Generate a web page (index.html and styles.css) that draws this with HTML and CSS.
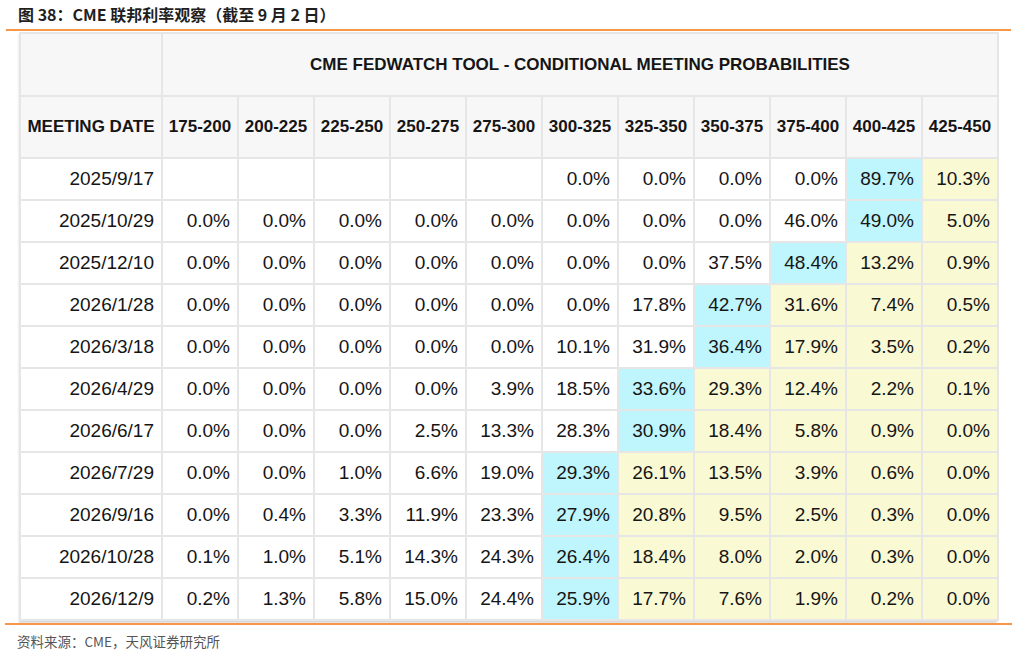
FILE: index.html
```html
<!DOCTYPE html>
<html lang="zh">
<head>
<meta charset="utf-8">
<title>CME 联邦利率观察</title>
<link rel="stylesheet" href="styles.css">
</head>
<body>
<div class="page">
  <div class="caption">图 38：CME 联邦利率观察（截至 9 月 2 日）</div>
  <div class="rule rule-top"></div>
  <div class="table-wrap">
    <table class="fw">
      <colgroup>
        <col class="c-date">
        <col class="c-n"><col class="c-n"><col class="c-n"><col class="c-n"><col class="c-n"><col class="c-n"><col class="c-n"><col class="c-n"><col class="c-n"><col class="c-n"><col class="c-n">
      </colgroup>
      <thead>
        <tr class="h1">
          <th></th>
          <th colspan="11" class="title">CME FEDWATCH TOOL - CONDITIONAL MEETING PROBABILITIES</th>
        </tr>
        <tr class="h2">
          <th>MEETING DATE</th>
          <th>175-200</th><th>200-225</th><th>225-250</th><th>250-275</th><th>275-300</th><th>300-325</th><th>325-350</th><th>350-375</th><th>375-400</th><th>400-425</th><th>425-450</th>
        </tr>
      </thead>
      <tbody>
        <tr><td>2025/9/17</td><td></td><td></td><td></td><td></td><td></td><td>0.0%</td><td>0.0%</td><td>0.0%</td><td>0.0%</td><td class="b">89.7%</td><td class="y">10.3%</td></tr>
        <tr><td>2025/10/29</td><td>0.0%</td><td>0.0%</td><td>0.0%</td><td>0.0%</td><td>0.0%</td><td>0.0%</td><td>0.0%</td><td>0.0%</td><td>46.0%</td><td class="b">49.0%</td><td class="y">5.0%</td></tr>
        <tr><td>2025/12/10</td><td>0.0%</td><td>0.0%</td><td>0.0%</td><td>0.0%</td><td>0.0%</td><td>0.0%</td><td>0.0%</td><td>37.5%</td><td class="b">48.4%</td><td class="y">13.2%</td><td class="y">0.9%</td></tr>
        <tr><td>2026/1/28</td><td>0.0%</td><td>0.0%</td><td>0.0%</td><td>0.0%</td><td>0.0%</td><td>0.0%</td><td>17.8%</td><td class="b">42.7%</td><td class="y">31.6%</td><td class="y">7.4%</td><td class="y">0.5%</td></tr>
        <tr><td>2026/3/18</td><td>0.0%</td><td>0.0%</td><td>0.0%</td><td>0.0%</td><td>0.0%</td><td>10.1%</td><td>31.9%</td><td class="b">36.4%</td><td class="y">17.9%</td><td class="y">3.5%</td><td class="y">0.2%</td></tr>
        <tr><td>2026/4/29</td><td>0.0%</td><td>0.0%</td><td>0.0%</td><td>0.0%</td><td>3.9%</td><td>18.5%</td><td class="b">33.6%</td><td class="y">29.3%</td><td class="y">12.4%</td><td class="y">2.2%</td><td class="y">0.1%</td></tr>
        <tr><td>2026/6/17</td><td>0.0%</td><td>0.0%</td><td>0.0%</td><td>2.5%</td><td>13.3%</td><td>28.3%</td><td class="b">30.9%</td><td class="y">18.4%</td><td class="y">5.8%</td><td class="y">0.9%</td><td class="y">0.0%</td></tr>
        <tr><td>2026/7/29</td><td>0.0%</td><td>0.0%</td><td>1.0%</td><td>6.6%</td><td>19.0%</td><td class="b">29.3%</td><td class="y">26.1%</td><td class="y">13.5%</td><td class="y">3.9%</td><td class="y">0.6%</td><td class="y">0.0%</td></tr>
        <tr><td>2026/9/16</td><td>0.0%</td><td>0.4%</td><td>3.3%</td><td>11.9%</td><td>23.3%</td><td class="b">27.9%</td><td class="y">20.8%</td><td class="y">9.5%</td><td class="y">2.5%</td><td class="y">0.3%</td><td class="y">0.0%</td></tr>
        <tr><td>2026/10/28</td><td>0.1%</td><td>1.0%</td><td>5.1%</td><td>14.3%</td><td>24.3%</td><td class="b">26.4%</td><td class="y">18.4%</td><td class="y">8.0%</td><td class="y">2.0%</td><td class="y">0.3%</td><td class="y">0.0%</td></tr>
        <tr><td>2026/12/9</td><td>0.2%</td><td>1.3%</td><td>5.8%</td><td>15.0%</td><td>24.4%</td><td class="b">25.9%</td><td class="y">17.7%</td><td class="y">7.6%</td><td class="y">1.9%</td><td class="y">0.2%</td><td class="y">0.0%</td></tr>
      </tbody>
    </table>
  </div>
  <div class="rule rule-bottom"></div>
  <div class="source">资料来源：CME，天风证券研究所</div>
</div>
</body>
</html>
```

FILE: styles.css
```css
html, body {
  margin: 0;
  padding: 0;
  background: #ffffff;
}

.page {
  width: 1017px;
  height: 652px;
  overflow: hidden;
}

.caption {
  height: 29px;
  padding-left: 18px;
  box-sizing: border-box;
  padding-top: 4px;
  font-family: "Noto Sans CJK SC", "Noto Sans", sans-serif;
  font-weight: 700;
  font-size: 16px;
  line-height: 21px;
  color: #1f1f1f;
}

.rule {
  height: 2px;
  background: #f79646;
}

.rule-top {
  margin-left: 6px;
  width: 1005px;
}

.rule-bottom {
  margin-left: 5px;
  width: 1007px;
  margin-top: 2px;
}

.table-wrap {
  margin-left: 19px;
  margin-top: 1px;
  width: 978px;
  box-shadow: 0 2px 2px rgba(0, 0, 0, 0.16);
}

.fw {
  border-collapse: collapse;
  table-layout: fixed;
  width: 978px;
  font-family: "Liberation Sans", Arial, sans-serif;
  color: #151515;
}

.c-date { width: 142px; }
.c-n { width: 76px; }

.fw th,
.fw td {
  border: 2px solid #e6e6e6;
  padding: 0 7px 0 0;
  white-space: nowrap;
  overflow: hidden;
}

.fw th {
  background: #f7f7f7;
  font-weight: 700;
  font-size: 17px;
  text-align: center;
  padding: 0;
}

.fw tr.h1 th { height: 61px; }
.fw tr.h2 th { height: 60px; }

.fw td {
  height: 40px;
  font-size: 19px;
  text-align: right;
  background: #ffffff;
}

.fw td.b { background: #bff5fc; }
.fw td.y { background: #f9f9d4; }

.source {
  padding-left: 17px;
  padding-top: 7px;
  font-family: "Noto Sans CJK SC", "Noto Sans", sans-serif;
  font-size: 13.5px;
  line-height: 18px;
  color: #555555;
}
```
